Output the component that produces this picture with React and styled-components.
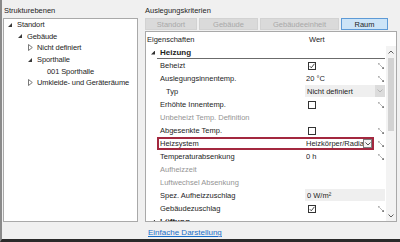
import React from 'react';
import styled, { createGlobalStyle } from 'styled-components';

const GlobalStyle = createGlobalStyle`
  *, *::before, *::after {
    box-sizing: border-box;
  }

  html, body {
    margin: 0;
    padding: 0;
    background: #f0f0f0;
  }

  body {
    font-family: "Liberation Sans", Arial, sans-serif;
    font-size: 7.5px;
    color: #1e1e1e;
  }
`;

const Window = styled.div`
  width: 400px;
  height: 242px;
  display: flex;
  flex-direction: column;
  background: #f0f0f0;
  border-left: 2px solid #8a8a8a;
  border-bottom: 3px solid #2a2a2a;
  overflow: hidden;
`;

const Panels = styled.div`
  display: flex;
  flex: 1;
  min-height: 0;
`;

const LeftPanel = styled.section`
  width: 136px;
  padding-left: 1px;
  display: flex;
  flex-direction: column;
`;

const RightPanel = styled.section`
  flex: 1;
  padding: 0 3px 0 7px;
  display: flex;
  flex-direction: column;
  min-width: 0;
`;

const PanelTitle = styled.div`
  height: 18px;
  padding: 2px 0 0 ${p => p.$indent || 0}px;
  display: flex;
  align-items: center;
  white-space: nowrap;
`;

const TreeBox = styled.div`
  flex: 1;
  background: #fff;
  border: 1px solid #a9a9a9;
`;

const TreeRow = styled.div`
  height: 11.6px;
  display: flex;
  align-items: center;
  padding-left: ${p => 4 + p.$level * 10}px;
  white-space: nowrap;
  letter-spacing: -0.1px;
`;

const Toggle = styled.span`
  width: 9px;
  flex: none;
  display: flex;
  align-items: center;
`;

const Tabs = styled.div`
  display: flex;
  gap: 2px;
  height: 12px;
  margin-bottom: 1px;
`;

const Tab = styled.div`
  width: ${p => p.$w}px;
  display: flex;
  align-items: center;
  justify-content: center;
  border: 1px solid ${p => (p.$active ? '#5d9ad6' : '#d2d2d2')};
  background: ${p => (p.$active ? '#cce4f7' : '#dadada')};
  color: ${p => (p.$active ? '#1e1e1e' : '#a9a9a9')};
`;

const GridBox = styled.div`
  flex: 1;
  min-height: 0;
  display: flex;
  flex-direction: column;
  background: #fff;
  border: 1px solid #a9a9a9;
`;

const HeaderRow = styled.div`
  height: 14px;
  flex: none;
  display: grid;
  grid-template-columns: 158px 1fr;
  align-items: center;

  span:first-child {
    padding-left: 1px;
  }

  span:last-child {
    padding-left: 5px;
  }
`;

const Body = styled.div`
  flex: 1;
  min-height: 0;
  display: flex;
`;

const RowList = styled.div`
  flex: 1;
  overflow: hidden;
`;

const Row = styled.div`
  display: grid;
  grid-template-columns: 11px 147px 70px 12px;
  height: 13px;
  align-items: stretch;
`;

const sel = '#a3283f';

const Name = styled.div`
  grid-column: 2;
  display: flex;
  align-items: center;
  padding-left: ${p => (p.$indent ? 9 : 3)}px;
  color: ${p => (p.$disabled ? '#959595' : '#1e1e1e')};
  white-space: nowrap;
  box-shadow: ${p =>
    p.$selected
      ? `inset 2px 0 0 ${sel}, inset 0 2px 0 ${sel}, inset 0 -2px 0 ${sel}`
      : 'none'};
`;

const Value = styled.div`
  grid-column: ${p => (p.$wide ? '3 / span 2' : '3')};
  display: flex;
  align-items: center;
  padding-left: 2px;
  margin: ${p => (p.$filled ? '0 1px 1px 1px' : '0')};
  background: ${p => (p.$filled ? '#efefef' : 'transparent')};
  white-space: nowrap;
  overflow: hidden;
  min-width: 0;
  box-shadow: ${p =>
    p.$selected
      ? `inset -2px 0 0 ${sel}, inset 0 2px 0 ${sel}, inset 0 -2px 0 ${sel}`
      : 'none'};
`;

const ValueText = styled.span`
  flex: 1;
  overflow: hidden;
  min-width: 0;
`;

const IconCell = styled.div`
  grid-column: 4;
  display: flex;
  align-items: center;
  justify-content: center;
  padding-left: 1px;
`;

const CategoryArrow = styled.div`
  grid-column: 1;
  display: flex;
  align-items: center;
  justify-content: flex-end;
  padding-right: 2px;
`;

const CategoryTitle = styled.div`
  grid-column: 2 / span 3;
  display: flex;
  align-items: center;
  padding-left: 3px;
  font-weight: bold;
  font-size: 8px;
  border-bottom: 1.5px solid #6b6b6b;
  margin-right: 1px;
`;

const Check = styled.span`
  width: 8px;
  height: 8px;
  margin-left: 2px;
  border: 1px solid #333;
  background: #fff;
  display: flex;
  align-items: center;
  justify-content: center;
`;

const DropButton = styled.span`
  flex: none;
  width: ${p => (p.$flat ? 10 : 9)}px;
  height: ${p => (p.$flat ? 12 : 9)}px;
  margin-right: ${p => (p.$flat ? 0 : 2)}px;
  display: flex;
  align-items: center;
  justify-content: center;
  background: ${p => (p.$flat ? '#dcdcdc' : '#f4f4f4')};
  border: ${p => (p.$flat ? 'none' : '1px solid #7d7d7d')};
`;

const ScrollBar = styled.div`
  width: 10px;
  flex: none;
  display: flex;
  flex-direction: column;
  background: #f3f3f3;
`;

const ScrollButton = styled.div`
  height: 11px;
  display: flex;
  align-items: center;
  justify-content: center;
`;

const Track = styled.div`
  flex: 1;
  padding: 1px 2px 0;
`;

const Thumb = styled.div`
  height: 73px;
  background: #d2d2d2;
`;

const Footer = styled.div`
  height: 17px;
  flex: none;
  display: flex;
  align-items: flex-end;
  padding: 0 0 2px 146px;
`;

const Link = styled.a`
  color: #1a6fc9;
  font-size: 8px;
  text-decoration: underline;
  cursor: pointer;
`;

const OpenArrow = ({ size = 4, color = '#3a3a3a' }) => (
  <svg width={size} height={size} viewBox="0 0 4 4">
    <path d="M4 0 L4 4 L0 4 Z" fill={color} />
  </svg>
);

const ClosedArrow = () => (
  <svg width="5" height="7" viewBox="0 0 5 7">
    <path d="M0.5 0.5 L4.3 3.5 L0.5 6.5 Z" fill="none" stroke="#6a6a6a" strokeWidth="0.9" />
  </svg>
);

const Chevron = ({ up, color = '#666' }) => (
  <svg width="6" height="4" viewBox="0 0 6 4">
    <path
      d={up ? 'M0.5 3.5 L3 1 L5.5 3.5' : 'M0.5 0.5 L3 3 L5.5 0.5'}
      fill="none"
      stroke={color}
      strokeWidth="1"
    />
  </svg>
);

const CheckMark = () => (
  <svg width="6" height="6" viewBox="0 0 6 6">
    <path d="M0.8 3.2 L2.3 4.8 L5.4 0.8" fill="none" stroke="#333" strokeWidth="0.9" />
  </svg>
);

// small diagonal "expand" marker shown next to editable values
const EditIcon = () => (
  <svg width="6" height="6" viewBox="0 0 6 6">
    <path d="M1.4 1.4 L4.6 4.6" stroke="#a6a6a6" strokeWidth="0.8" />
    <rect x="0" y="0" width="1.6" height="1.6" fill="#b0b0b0" />
    <rect x="4.2" y="4.2" width="1.8" height="1.8" fill="#7e7e7e" />
  </svg>
);

const TREE = [
  { level: 0, state: 'open', label: 'Standort' },
  { level: 1, state: 'open', label: 'Gebäude' },
  { level: 2, state: 'closed', label: 'Nicht definiert' },
  { level: 2, state: 'open', label: 'Sporthalle' },
  { level: 3, state: null, label: '001 Sporthalle' },
  { level: 2, state: 'closed', label: 'Umkleide- und Geräteräume' },
];

const TABS = [
  { label: 'Standort', w: 52 },
  { label: 'Gebäude', w: 59 },
  { label: 'Gebäudeeinheit', w: 79 },
  { label: 'Raum', w: 47, active: true },
];

// value kinds: text, check, field (grey read-only box), combo
const PROPS = [
  { name: 'Beheizt', kind: 'check', checked: true, edit: true },
  { name: 'Auslegungsinnentemp.', kind: 'text', value: '20 °C', edit: true },
  { name: 'Typ', indent: true, kind: 'field', value: 'Nicht definiert', drop: true },
  { name: 'Erhöhte Innentemp.', kind: 'check', edit: true },
  { name: 'Unbeheizt Temp. Definition', disabled: true },
  { name: 'Abgesenkte Temp.', kind: 'check', edit: true },
  { name: 'Heizsystem', kind: 'combo', value: 'Heizkörper/Radiatoren', edit: true, selected: true },
  { name: 'Temperaturabsenkung', kind: 'text', value: '0 h', edit: true },
  { name: 'Aufheizzeit', disabled: true },
  { name: 'Luftwechsel Absenkung', disabled: true },
  { name: 'Spez. Aufheizzuschlag', kind: 'field', value: '0 W/m²' },
  { name: 'Gebäudezuschlag', kind: 'check', checked: true, edit: true },
];

const PropValue = ({ p }) => {
  if (!p.kind) return <Value />;
  if (p.kind === 'check') {
    return (
      <Value>
        <Check>{p.checked && <CheckMark />}</Check>
      </Value>
    );
  }
  if (p.kind === 'field') {
    return (
      <Value $wide $filled>
        <ValueText>{p.value}</ValueText>
        {p.drop && (
          <DropButton $flat>
            <Chevron color="#b4b4b4" />
          </DropButton>
        )}
      </Value>
    );
  }
  if (p.kind === 'combo') {
    return (
      <Value $selected={p.selected}>
        <ValueText>{p.value}</ValueText>
        <DropButton>
          <Chevron color="#555" />
        </DropButton>
      </Value>
    );
  }
  return (
    <Value>
      <ValueText>{p.value}</ValueText>
    </Value>
  );
};

const PropRow = ({ p }) => (
  <Row>
    <Name $indent={p.indent} $disabled={p.disabled} $selected={p.selected}>
      {p.name}
    </Name>
    <PropValue p={p} />
    {p.edit && (
      <IconCell>
        <EditIcon />
      </IconCell>
    )}
  </Row>
);

const Category = ({ title }) => (
  <Row>
    <CategoryArrow>
      <OpenArrow size={4.5} color="#2e2e2e" />
    </CategoryArrow>
    <CategoryTitle>{title}</CategoryTitle>
  </Row>
);

const App = () => (
  <>
    <GlobalStyle />
    <Window>
      <Panels>
        <LeftPanel>
          <PanelTitle $indent={1}>Strukturebenen</PanelTitle>
          <TreeBox>
            {TREE.map(item => (
              <TreeRow key={item.label} $level={item.level}>
                <Toggle>
                  {item.state === 'open' && <OpenArrow />}
                  {item.state === 'closed' && <ClosedArrow />}
                </Toggle>
                {item.label}
              </TreeRow>
            ))}
          </TreeBox>
        </LeftPanel>

        <RightPanel>
          <PanelTitle>Auslegungskriterien</PanelTitle>
          <Tabs>
            {TABS.map(t => (
              <Tab key={t.label} $w={t.w} $active={t.active}>
                {t.label}
              </Tab>
            ))}
          </Tabs>
          <GridBox>
            <HeaderRow>
              <span>Eigenschaften</span>
              <span>Wert</span>
            </HeaderRow>
            <Body>
              <RowList>
                <Category title="Heizung" />
                {PROPS.map(p => (
                  <PropRow key={p.name} p={p} />
                ))}
                <Category title="Lüftung" />
              </RowList>
              <ScrollBar>
                <ScrollButton>
                  <Chevron up color="#606060" />
                </ScrollButton>
                <Track>
                  <Thumb />
                </Track>
                <ScrollButton>
                  <Chevron color="#606060" />
                </ScrollButton>
              </ScrollBar>
            </Body>
          </GridBox>
        </RightPanel>
      </Panels>

      <Footer>
        <Link>Einfache Darstellung</Link>
      </Footer>
    </Window>
  </>
);

export default App;
